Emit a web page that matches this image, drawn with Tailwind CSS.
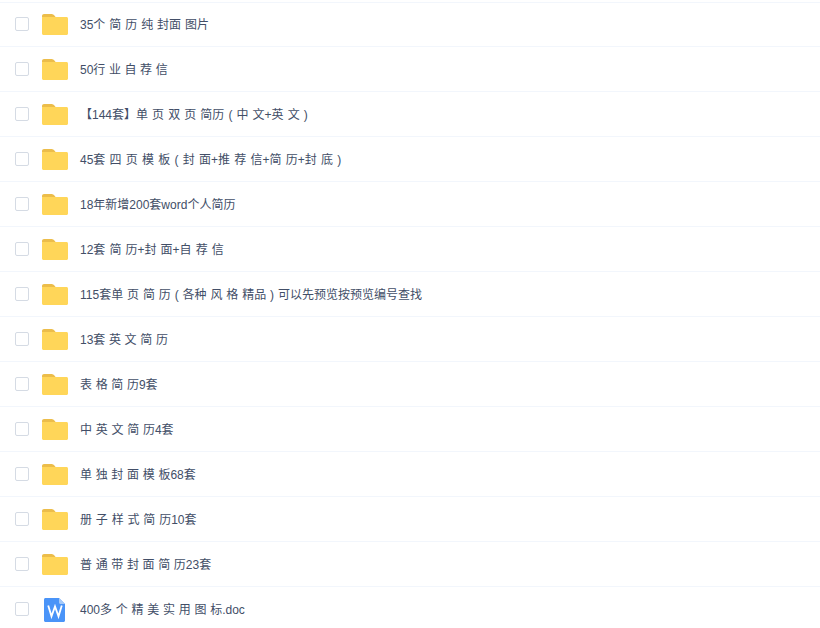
<!DOCTYPE html>
<html>
<head>
<meta charset="UTF-8">
<script src="https://cdn.jsdelivr.net/npm/@tailwindcss/browser@4"></script>
</head>
<body class="bg-white overflow-hidden font-['Liberation_Sans','Noto_Sans_CJK_SC',sans-serif] text-xs text-[#424e67] [word-spacing:0.75px]">
<svg width="0" height="0" class="absolute">
  <defs>
    <symbol id="folder" viewBox="0 0 26 21">
      <path d="M0 2C0 .9.9 0 2 0h7c1.500 0 2.600.5 3.400 1.500L14 3.500H0Z" fill="#ecbd4a"/>
      <path d="M0 4C0 3.400.4 3 1 3h23.500c.8 0 1.500.7 1.500 1.500v15c0 .8-.7 1.500-1.500 1.500h-23C.7 21 0 20.300 0 19.500Z" fill="#ffd659"/>
    </symbol>
  </defs>
</svg>
<ul class="pt-[2px]">
  <li class="h-[44px] pb-[1px] flex items-center border-t border-[#f2f6fc]">
    <span class="w-[14px] h-[14px] ml-[15px] border border-[#d5dbe4] rounded-[2px]"></span>
    <svg class="w-[26px] h-[21px] ml-[13px] mt-[1px]"><use href="#folder"/></svg>
    <span class="ml-[12px] pt-[2px] [word-spacing:0.6px]">35个 简 历 纯 封面 图片</span>
  </li>
  <li class="h-[45px] flex items-center border-t border-[#f2f6fc]">
    <span class="w-[14px] h-[14px] ml-[15px] border border-[#d5dbe4] rounded-[2px]"></span>
    <svg class="w-[26px] h-[21px] ml-[13px] mt-[1px]"><use href="#folder"/></svg>
    <span class="ml-[12px] pt-[2px] [word-spacing:0.25px]">50行 业 自 荐 信</span>
  </li>
  <li class="h-[45px] flex items-center border-t border-[#f2f6fc]">
    <span class="w-[14px] h-[14px] ml-[15px] border border-[#d5dbe4] rounded-[2px]"></span>
    <svg class="w-[26px] h-[21px] ml-[13px] mt-[1px]"><use href="#folder"/></svg>
    <span class="ml-[12px] pt-[2px]">【144套】单 页 双 页 简历 ( 中 文+英 文 )</span>
  </li>
  <li class="h-[45px] flex items-center border-t border-[#f2f6fc]">
    <span class="w-[14px] h-[14px] ml-[15px] border border-[#d5dbe4] rounded-[2px]"></span>
    <svg class="w-[26px] h-[21px] ml-[13px] mt-[1px]"><use href="#folder"/></svg>
    <span class="ml-[12px] pt-[2px] [word-spacing:0.9px]">45套 四 页 模 板 ( 封 面+推 荐 信+简 历+封 底 )</span>
  </li>
  <li class="h-[45px] flex items-center border-t border-[#f2f6fc]">
    <span class="w-[14px] h-[14px] ml-[15px] border border-[#d5dbe4] rounded-[2px]"></span>
    <svg class="w-[26px] h-[21px] ml-[13px] mt-[1px]"><use href="#folder"/></svg>
    <span class="ml-[12px] pt-[2px]">18年新增200套word个人简历</span>
  </li>
  <li class="h-[45px] flex items-center border-t border-[#f2f6fc]">
    <span class="w-[14px] h-[14px] ml-[15px] border border-[#d5dbe4] rounded-[2px]"></span>
    <svg class="w-[26px] h-[21px] ml-[13px] mt-[1px]"><use href="#folder"/></svg>
    <span class="ml-[12px] pt-[2px]">12套 简 历+封 面+自 荐 信</span>
  </li>
  <li class="h-[45px] flex items-center border-t border-[#f2f6fc]">
    <span class="w-[14px] h-[14px] ml-[15px] border border-[#d5dbe4] rounded-[2px]"></span>
    <svg class="w-[26px] h-[21px] ml-[13px] mt-[1px]"><use href="#folder"/></svg>
    <span class="ml-[12px] pt-[2px] [word-spacing:0.55px]">115套单 页 简 历 ( 各种 风 格 精品 ) 可以先预览按预览编号查找</span>
  </li>
  <li class="h-[45px] flex items-center border-t border-[#f2f6fc]">
    <span class="w-[14px] h-[14px] ml-[15px] border border-[#d5dbe4] rounded-[2px]"></span>
    <svg class="w-[26px] h-[21px] ml-[13px] mt-[1px]"><use href="#folder"/></svg>
    <span class="ml-[12px] pt-[2px] [word-spacing:0.3px]">13套 英 文 简 历</span>
  </li>
  <li class="h-[45px] flex items-center border-t border-[#f2f6fc]">
    <span class="w-[14px] h-[14px] ml-[15px] border border-[#d5dbe4] rounded-[2px]"></span>
    <svg class="w-[26px] h-[21px] ml-[13px] mt-[1px]"><use href="#folder"/></svg>
    <span class="ml-[12px] pt-[2px] [word-spacing:0.3px]">表 格 简 历9套</span>
  </li>
  <li class="h-[45px] flex items-center border-t border-[#f2f6fc]">
    <span class="w-[14px] h-[14px] ml-[15px] border border-[#d5dbe4] rounded-[2px]"></span>
    <svg class="w-[26px] h-[21px] ml-[13px] mt-[1px]"><use href="#folder"/></svg>
    <span class="ml-[12px] pt-[2px] [word-spacing:0.4px]">中 英 文 简 历4套</span>
  </li>
  <li class="h-[45px] flex items-center border-t border-[#f2f6fc]">
    <span class="w-[14px] h-[14px] ml-[15px] border border-[#d5dbe4] rounded-[2px]"></span>
    <svg class="w-[26px] h-[21px] ml-[13px] mt-[1px]"><use href="#folder"/></svg>
    <span class="ml-[12px] pt-[2px] [word-spacing:0.35px]">单 独 封 面 模 板68套</span>
  </li>
  <li class="h-[45px] flex items-center border-t border-[#f2f6fc]">
    <span class="w-[14px] h-[14px] ml-[15px] border border-[#d5dbe4] rounded-[2px]"></span>
    <svg class="w-[26px] h-[21px] ml-[13px] mt-[1px]"><use href="#folder"/></svg>
    <span class="ml-[12px] pt-[2px] [word-spacing:0.5px]">册 子 样 式 简 历10套</span>
  </li>
  <li class="h-[45px] flex items-center border-t border-[#f2f6fc]">
    <span class="w-[14px] h-[14px] ml-[15px] border border-[#d5dbe4] rounded-[2px]"></span>
    <svg class="w-[26px] h-[21px] ml-[13px] mt-[1px]"><use href="#folder"/></svg>
    <span class="ml-[12px] pt-[2px] [word-spacing:0.3px]">普 通 带 封 面 简 历23套</span>
  </li>
  <li class="h-[45px] flex items-center border-t border-[#f2f6fc]">
    <span class="w-[14px] h-[14px] ml-[15px] border border-[#d5dbe4] rounded-[2px]"></span>
    <svg class="w-[21px] h-[24px] ml-[15px] mr-[3px] mt-[2px]" viewBox="0 0 21 24">
      <path d="M1.500 0H15l6 6v16.500c0 .8-.7 1.500-1.500 1.500h-18C.7 24 0 23.300 0 22.500v-21C0 .7.7 0 1.500 0Z" fill="#4a94f8"/>
      <path d="M15 0l6 6h-4.500C15.700 6 15 5.300 15 4.500Z" fill="#a5caf9"/>
      <path d="M4.200 7.500l3.300 10.800 3.500-9.800 3.500 9.800 3.300-10.800" fill="none" stroke="#fff" stroke-width="1.800"/>
    </svg>
    <span class="ml-[12px] pt-[2px] [word-spacing:0.4px]">400多 个 精 美 实 用 图 标.doc</span>
  </li>
</ul>
</body>
</html>
